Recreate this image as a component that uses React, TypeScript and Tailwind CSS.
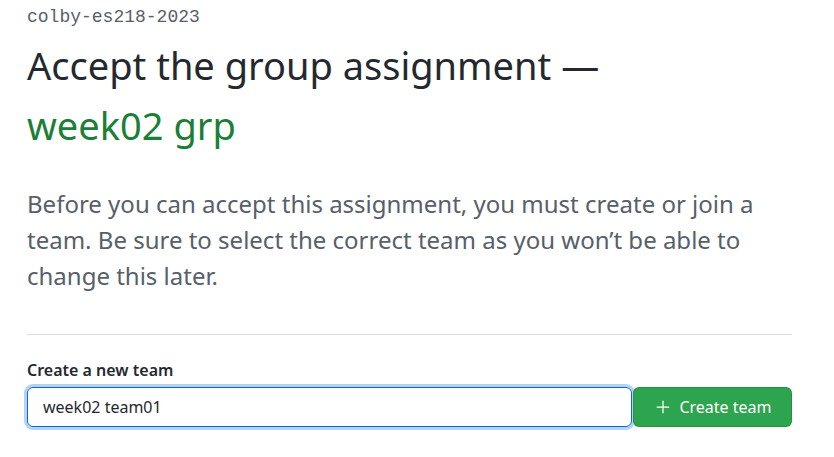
import React from "react";
import { Plus } from "lucide-react";

const App = () => {
  return (
    <div className="w-[834px] h-[457px] overflow-hidden bg-white pl-[27px] pr-[42px] font-['Noto_Sans',sans-serif]">
      <div className="pt-[5px] font-['Liberation_Mono',monospace] text-[18px] leading-[24px] text-[#57606a]">
        colby-es218-2023
      </div>
      <h1 className="mt-[6px] text-[38px] leading-[60px] font-normal text-[#24292f]">
        Accept the group assignment —
        <br />
        <span className="text-[#1a7f37]">week02 grp</span>
      </h1>
      <p className="mt-[31px] text-[24px] leading-[36px] text-[#57606a]">
        Before you can accept this assignment, you must create or join a
        team. Be sure to select the correct team as you won’t be able to
        change this later.
      </p>
      <div className="mt-[40px] border-t border-[#d8dee4]" />
      <div className="mt-[24px]">
        <label className="block text-[16px] leading-[22px] font-semibold text-[#24292f]">
          Create a new team
        </label>
        <div className="mt-[6px] flex items-stretch">
          <input
            defaultValue="week02 team01"
            className="h-[40px] flex-1 rounded-[6px] border border-[#0969da] px-[15px] text-[16px] text-[#24292f] outline-none shadow-[0_0_0_3px_rgba(9,105,218,0.3)]"
          />
          <button className="ml-[1px] flex h-[40px] w-[159px] items-center justify-center gap-[6px] rounded-[6px] border border-[rgba(27,31,36,0.15)] bg-[#2da44e] text-[16px] text-white">
            <Plus size={20} strokeWidth={1.5} />
            Create team
          </button>
        </div>
      </div>
    </div>
  );
};

export default App;
